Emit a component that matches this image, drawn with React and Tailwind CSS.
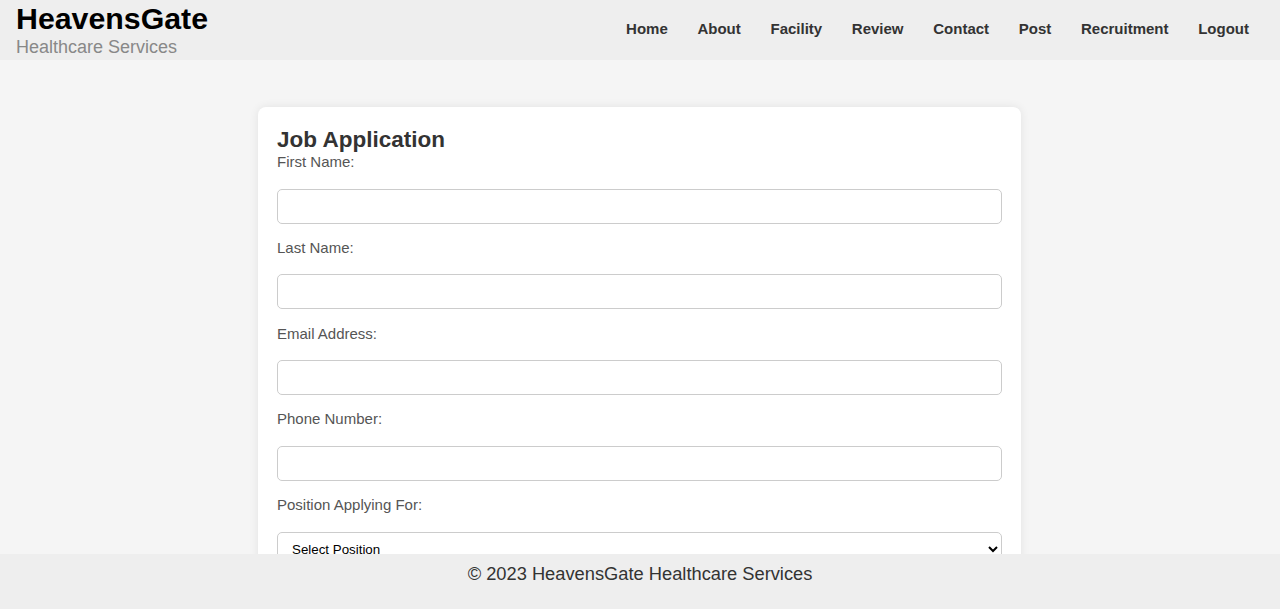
import React from "react";

const fields = [
  { label: "First Name:", type: "text" },
  { label: "Last Name:", type: "text" },
  { label: "Email Address:", type: "email" },
  { label: "Phone Number:", type: "tel" },
];

export default function App() {
  const links = ["Home", "About", "Facility", "Review", "Contact", "Post", "Recruitment", "Logout"];
  return (
    <div className="min-h-screen bg-[#f5f5f5] font-['Liberation_Sans',Arial,sans-serif] pb-[80px]">
      <header className="h-[60px] bg-[#eeeeee] flex items-start justify-between pl-[16px] pr-[31px]">
        <div className="pt-[4px]">
          <h1 className="text-[30.3px] leading-[30px] font-bold text-black">HeavensGate</h1>
          <div className="mt-[4px] text-[18px] leading-[18px] text-[#888888]">Healthcare Services</div>
        </div>
        <nav className="h-[60px] flex items-center pb-[3px]">
          <ul className="flex gap-[29.7px]">
            {links.map((l) => (
              <li key={l}>
                <a href="#" className="text-[15px] font-bold text-[#333333]">{l}</a>
              </li>
            ))}
          </ul>
        </nav>
      </header>

      <main className="pt-[47px] flex justify-center pr-[1px]">
        <div className="w-[763px] bg-white rounded-[8px] shadow-[0_0_10px_rgba(0,0,0,0.08)] p-[19px]">
          <h2 className="text-[22.5px] leading-[27px] font-bold text-[#333333]">Job Application</h2>
          <form>
            {fields.map((f) => (
              <div key={f.label}>
                <label className="block text-[15px] leading-[17px] text-[#555555] mb-[18.5px]">{f.label}</label>
                <input
                  type={f.type}
                  className="block w-full h-[35px] border border-[#cccccc] rounded-[5px] bg-white px-[10px] text-[15px] mb-[15.25px]"
                />
              </div>
            ))}
            <label className="block text-[15px] leading-[17px] text-[#555555] mb-[18.5px]">Position Applying For:</label>
            <select className="block w-full h-[35px] border border-[#cccccc] rounded-[5px] bg-white px-[10px] text-[13.33px] text-black mb-[15.25px]">
              <option>Select Position</option>
              <option>Nurse</option>
              <option>Caregiver</option>
            </select>
            <label className="block text-[15px] leading-[17px] text-[#555555] mb-[18.5px]">Resume:</label>
            <input type="file" className="block w-full h-[35px] mb-[14px]" />
          </form>
        </div>
      </main>

      <footer className="fixed bottom-0 left-0 right-0 h-[55px] bg-[#eeeeee] pt-[6px] text-center text-[18.3px] text-[#333333]">
        © 2023 HeavensGate Healthcare Services
      </footer>
    </div>
  );
}
